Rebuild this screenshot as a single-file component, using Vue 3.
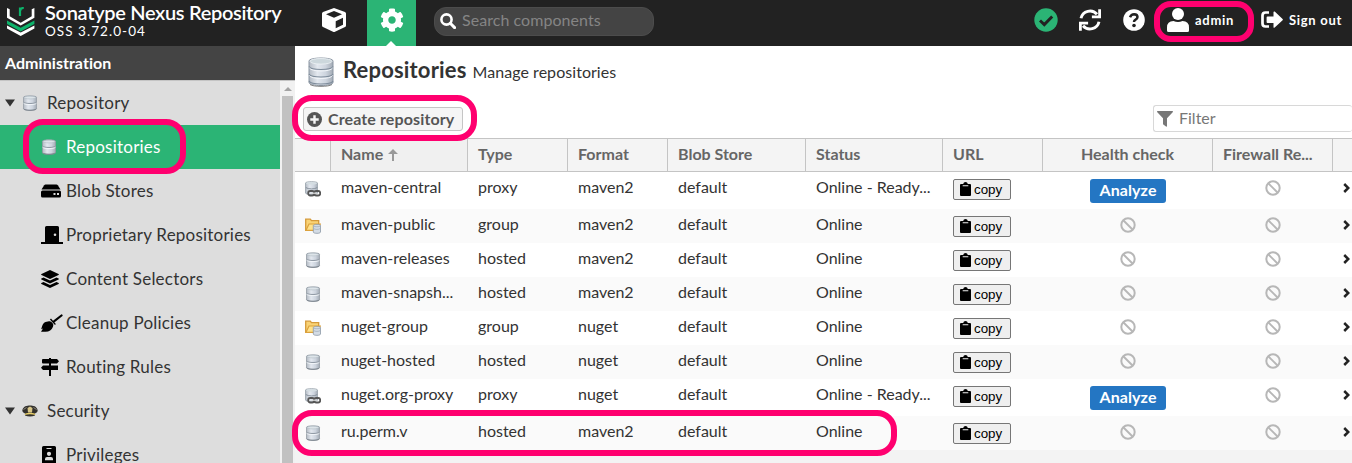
<script setup>
const menu = [
  { label: 'Repository', icon: 'db', group: true },
  { label: 'Repositories', icon: 'db', active: true },
  { label: 'Blob Stores', icon: 'hdd' },
  { label: 'Proprietary Repositories', icon: 'door' },
  { label: 'Content Selectors', icon: 'layers' },
  { label: 'Cleanup Policies', icon: 'broom' },
  { label: 'Routing Rules', icon: 'signs' },
  { label: 'Security', icon: 'cap', group: true },
  { label: 'Privileges', icon: 'badge' },
]

const columns = ['', 'Name', 'Type', 'Format', 'Blob Store', 'Status', 'URL', 'Health check', 'Firewall Re...', '']

const rows = [
  { name: 'maven-central', type: 'proxy', format: 'maven2' },
  { name: 'maven-public', type: 'group', format: 'maven2' },
  { name: 'maven-releases', type: 'hosted', format: 'maven2' },
  { name: 'maven-snapsh...', type: 'hosted', format: 'maven2' },
  { name: 'nuget-group', type: 'group', format: 'nuget' },
  { name: 'nuget-hosted', type: 'hosted', format: 'nuget' },
  { name: 'nuget.org-proxy', type: 'proxy', format: 'nuget' },
  { name: 'ru.perm.v', type: 'hosted', format: 'maven2' },
]
const rowIcon = { proxy: 'proxy', group: 'group', hosted: 'db' }
</script>

<template>
  <div class="app">
    <svg class="defs" width="0" height="0" aria-hidden="true">
      <linearGradient id="metal" x1="0" x2="1" y1="0" y2="0">
        <stop offset="0" stop-color="#b3bac3" /><stop offset=".35" stop-color="#e3e8ef" />
        <stop offset=".7" stop-color="#cdd4de" /><stop offset="1" stop-color="#a3abb5" />
      </linearGradient>
      <symbol id="db" viewBox="0 0 16 16">
        <path d="M1.500 2.200C1.500 .4 14.500 .4 14.500 2.200V13.800C14.500 15.800 1.500 15.800 1.500 13.800Z" fill="url(#metal)" stroke="#959da6" stroke-width=".8" />
        <ellipse cx="8" cy="2.600" rx="6" ry="1.300" fill="#dde4e9" stroke="#a9b4bc" stroke-width=".5" />
        <path d="M1.600 7.200C3 8.900 13 8.900 14.400 7.200" fill="none" stroke="#87919c" stroke-width=".9" />
        <path d="M1.600 8.300C3 10 13 10 14.400 8.300" fill="none" stroke="#f4f7fa" stroke-width=".9" />
        <path d="M1.700 13.800C3 15.800 13 15.800 14.300 13.800" fill="none" stroke="#757e87" stroke-width=".9" />
      </symbol>
      <symbol id="bigdb" viewBox="0 0 26 30">
        <path d="M1 4C1 0 25 0 25 4V25.500C25 29.500 1 29.500 1 25.500Z" fill="url(#metal)" stroke="#8b96a3" />
        <ellipse cx="13" cy="4.300" rx="11" ry="2.800" fill="#ccd7dc" stroke="#eef2f5" stroke-width=".8" />
        <path d="M1 9.500C3 13.500 23 13.500 25 9.500M1 17C3 21 23 21 25 17M1 24C3 28 23 28 25 24" fill="none" stroke="#7e8c9b" stroke-width="1.200" />
        <path d="M1.500 11C3 15 23 15 24.500 11M1.500 18.500C3 22.500 23 22.500 24.500 18.500" fill="none" stroke="#f2f5f9" />
        <path d="M2 27.500C5 30 21 30 24 27.500" fill="none" stroke="#777" stroke-width=".9" />
      </symbol>
      <symbol id="proxy" viewBox="0 0 16 16">
        <path d="M.5 2C.5 .2 12.500 .2 12.500 2V12C12.500 14 .5 14 .5 12Z" fill="url(#metal)" stroke="#98a2ab" stroke-width=".8" />
        <ellipse cx="6.500" cy="2.300" rx="5.500" ry="1.200" fill="#d4dde2" />
        <path d="M.8 6.500C3 8.400 10 8.400 12.300 6.500" fill="none" stroke="#87919c" />
        <g fill="none" stroke="#555" stroke-width="1.800"><rect x="3.200" y="10" width="6" height="4.500" rx="2" /><rect x="9.200" y="10" width="6" height="4.500" rx="2" /></g>
        <path d="M6.500 12.200H12" stroke="#ddd" stroke-width="1.200" />
      </symbol>
      <symbol id="group" viewBox="0 0 16 16">
        <path d="M.7 12.300V1.200H5.300L6.500 2.700H13.700V6L11.500 12.300Z" fill="#f9d376" stroke="#d59a3a" stroke-width="1.300" />
        <path d="M1 12.300L4 6H15.300L12 12.300Z" fill="#ffe28b" stroke="#dca23d" stroke-width="1.200" />
        <path d="M8.300 7.500C8.300 6 15.500 6 15.500 7.500V14C15.500 15.800 8.300 15.800 8.300 14Z" fill="#d4dce5" stroke="#8b98a6" stroke-width=".8" />
        <path d="M8.500 10.500C10 11.700 14 11.700 15.300 10.500M8.500 8C10 9 14 9 15.300 8" fill="none" stroke="#a2aebb" stroke-width=".8" />
      </symbol>
      <symbol id="hdd" viewBox="0 0 20 16">
        <path d="M4.500 1.500H15.500Q16.300 1.500 16.800 2.200L19.500 6.500H.5L3.200 2.200Q3.700 1.500 4.500 1.500Z" />
        <path d="M1.500 7.500H18.500Q20 7.500 20 9V13Q20 14.500 18.500 14.500H1.500Q0 14.500 0 13V9Q0 7.500 1.500 7.500ZM12.500 10V12H14.500V10ZM16 10V12H18V10Z" fill-rule="evenodd" />
      </symbol>
      <symbol id="door" viewBox="0 0 22 18">
        <path d="M0 16H4V1.500Q4 0 5.500 0H16.500Q18 0 18 1.500V16H22V18H0ZM14 7.500A1.300 1.300 0 1 0 14 10.100A1.300 1.300 0 1 0 14 7.500Z" fill-rule="evenodd" />
      </symbol>
      <symbol id="layers" viewBox="0 0 18 18">
        <path d="M9 0L17.500 4Q18.300 4.500 17.500 5L9 9L.5 5Q-.3 4.500 .5 4Z" />
        <path d="M.4 8.500L2.500 7.600L9 10.600L15.500 7.600L17.600 8.500Q18.200 9 17.600 9.500L9 13.500L.4 9.500Q-.2 9 .4 8.500Z" />
        <path d="M.4 13L2.500 12L9 15L15.500 12L17.600 13Q18.200 13.500 17.600 14L9 18L.4 14Q-.2 13.500 .4 13Z" />
      </symbol>
      <symbol id="broom" viewBox="0 0 22 18">
        <path d="M20.500 1.500L13 7.300" stroke="#000" stroke-width="2.200" stroke-linecap="round" />
        <path d="M10 4.500L15 10.200L13.700 10.800L8.900 5.600Z" />
        <path d="M8 7.300Q10 7 11.500 8.900Q13 10.600 12 12.700Q10 17.800 4.500 17.800H0L2 14.500L.2 15.200Q1.500 9 4.500 8Z" />
      </symbol>
      <symbol id="signs" viewBox="0 0 18 18">
        <path d="M8 0H10V1H16L18 3.200L16 5.500H10V7.500H17V12H10V18H8V12H2L0 9.800L2 7.500H8V5.500H2Q1 5.500 1 4.500V2Q1 1 2 1H8Z" />
      </symbol>
      <symbol id="cap" viewBox="0 0 16 12">
        <path d="M.3 5.500C1 1 5 .4 8 .4S15 1 15.700 5.500C15.500 7.500 14 8 13 8.500V10.500Q8 12.500 3 10.500V8.500C2 8 .5 7.500 .3 5.500Z" fill="#33312d" />
        <path d="M5.500 3L8 1.500L10.500 3L10 7.500H6Z" fill="#d9c789" />
        <path d="M3.200 8.500Q8 6.800 12.800 8.500L13.500 10Q8 8.700 2.500 10Z" fill="#ead16b" />
        <path d="M1.500 4.500L4.500 2.500M14.500 4.500L11.500 2.500" stroke="#8c8a80" />
      </symbol>
      <symbol id="badge" viewBox="0 0 14 18">
        <path d="M1.500 0H12.500Q14 0 14 1.500V18H0V1.500Q0 0 1.500 0ZM4.500 2V3H9.500V2ZM7 5.700A2.100 2.100 0 1 0 7 9.900A2.100 2.100 0 1 0 7 5.700ZM3 14.300H11V13Q11 11 9 11H5Q3 11 3 13Z" fill-rule="evenodd" />
      </symbol>
      <symbol id="check" viewBox="0 0 24 24">
        <circle cx="12" cy="12" r="11.700" fill="#2bb475" /><path d="M6 12.500L10.300 16.600L18.200 8.400" fill="none" stroke="#222" stroke-width="2.900" />
      </symbol>
      <symbol id="refresh" viewBox="0 0 22 22">
        <path d="M2 9.300A9.200 9.200 0 0 1 18 5.300M20 12.700A9.200 9.200 0 0 1 4 16.700" fill="none" stroke="#fff" stroke-width="2.900" />
        <path d="M19.200 .3H22V9.300H12.900V6.500H19.200ZM2.800 21.700H0V12.700H9.100V15.500H2.800Z" fill="#fff" />
      </symbol>
      <symbol id="help" viewBox="0 0 22 22">
        <circle cx="11" cy="11" r="10.800" fill="#fff" />
        <path d="M7 8.200Q8.200 5.200 11.100 5.200Q14.500 5.300 14.500 8.100Q14.500 9.700 12.600 10.700Q11 11.500 11 12.900" fill="none" stroke="#222" stroke-width="2.500" />
        <circle cx="11" cy="16.500" r="1.800" fill="#222" />
      </symbol>
      <symbol id="user" viewBox="0 0 22 24">
        <circle cx="11" cy="6" r="6" fill="#fff" /><path d="M0 24V19.500Q0 13 6.500 13Q11 15 15.500 13Q22 13 22 19.500V22.500Q22 24 20.500 24H1.500Q0 24 0 22.500Z" fill="#fff" />
      </symbol>
      <symbol id="out" viewBox="0 0 22 18">
        <path d="M8 1.500H4.500Q1.500 1.500 1.500 4.500V12.500Q1.500 15.500 4.500 15.500H8" fill="none" stroke="#fff" stroke-width="2.700" />
        <path d="M6.500 5.500H12.500V1Q12.700 0 13.700 .6L21.600 8Q22.200 8.600 21.600 9.200L13.700 16.600Q12.700 17.200 12.500 16.200V12H6.500Q5.600 12 5.600 11V6.500Q5.600 5.500 6.500 5.500Z" fill="#fff" />
      </symbol>
      <symbol id="ban" viewBox="0 0 16 16">
        <circle cx="8" cy="8" r="6.700" fill="none" stroke="#b7b7b7" stroke-width="2" /><path d="M3.500 3.500L12.500 12.500" stroke="#b7b7b7" stroke-width="1.900" />
      </symbol>
      <symbol id="clip" viewBox="0 0 11 14">
        <path d="M1 2H3.200Q3.500 0 5.500 0Q7.500 0 7.800 2H10Q11 2 11 3V13Q11 14 10 14H1Q0 14 0 13V3Q0 2 1 2ZM2.700 3.300V4.300H8.300V3.300Z" fill-rule="evenodd" />
      </symbol>
    </svg>

    <header class="topbar">
      <svg class="logo" viewBox="0 0 28 30">
        <path d="M0 3L2.700 4.200V11.200L13.700 17.700L24.700 11.200V4.200L27.400 3V12.700L13.700 20.500L0 12.700Z" fill="#fff" transform="translate(0 -2)" />
        <path d="M0 13.500L13.700 20.800L27.400 13.500V17L13.700 24.500L0 17Z" fill="#0db36b" />
        <path d="M0 19.500L13.700 26.500L27.400 19.500V22.500L13.700 30L0 22.500Z" fill="#fff" transform="translate(0 -1)" />
        <path d="M13 9V.5M13 4Q13.500 .8 16.800 1" fill="none" stroke="#0db36b" stroke-width="2.200" />
      </svg>
      <div class="brand">
        <div class="product">Sonatype Nexus Repository</div>
        <div class="version">OSS 3.72.0-04</div>
      </div>
      <div class="mode">
        <svg width="26" height="24" viewBox="0 0 26 24"><path d="M13 0L24 4Q25 4.500 25 5.500V17.500Q25 18.500 24 19L14 23.700Q13 24.200 12 23.700L2 19Q1 18.500 1 17.500V5.500Q1 4.500 2 4ZM13 3L5 6.200L13 9.700L21 6.200ZM14.700 13.200V20.200L22 16.700V9.700Z" fill="#fff" fill-rule="evenodd" /></svg>
      </div>
      <div class="mode selected">
        <svg width="24" height="24" viewBox="0 0 512 512"><path fill="#fff" d="M487.400 315.700l-42.600-24.600c4.300-23.200 4.300-47 0-70.200l42.600-24.600c4.900-2.800 7.100-8.600 5.500-14-11.100-35.600-30-67.800-54.700-94.600-3.800-4.100-10-5.100-14.800-2.300L380.800 110c-17.900-15.400-38.500-27.300-60.800-35.100V25.800c0-5.600-3.900-10.500-9.400-11.700-36.700-8.200-74.300-7.800-109.200 0-5.500 1.200-9.400 6.100-9.400 11.700V75c-22.200 7.900-42.800 19.800-60.800 35.100L88.700 85.500c-4.900-2.800-11-1.900-14.800 2.300-24.700 26.700-43.600 58.900-54.700 94.600-1.700 5.400.6 11.200 5.500 14L67.300 221c-4.300 23.200-4.300 47 0 70.200l-42.600 24.600c-4.900 2.800-7.100 8.600-5.500 14 11.100 35.600 30 67.800 54.700 94.600 3.800 4.100 10 5.100 14.800 2.300l42.600-24.600c17.900 15.400 38.500 27.300 60.800 35.100v49.200c0 5.600 3.900 10.500 9.400 11.700 36.700 8.200 74.300 7.800 109.200 0 5.500-1.200 9.400-6.100 9.400-11.700v-49.200c22.200-7.900 42.800-19.800 60.800-35.100l42.600 24.600c4.900 2.800 11 1.900 14.800-2.300 24.700-26.700 43.600-58.900 54.700-94.600 1.500-5.500-.7-11.300-5.600-14.100zM256 336c-44.100 0-80-35.900-80-80s35.900-80 80-80 80 35.900 80 80-35.900 80-80 80z" /></svg>
      </div>
      <div class="search">
        <svg width="16" height="16" viewBox="0 0 16 16"><circle cx="6.500" cy="6.500" r="5.100" fill="none" stroke="#fff" stroke-width="2.600" /><path d="M10.300 10.300L14.600 14.600" stroke="#fff" stroke-width="3" stroke-linecap="round" /></svg>
        <span>Search components</span>
      </div>
      <div class="actions">
        <svg class="a-check" width="24" height="24"><use href="#check" /></svg>
        <svg class="a-refresh" width="22" height="22"><use href="#refresh" /></svg>
        <svg class="a-help" width="22" height="22"><use href="#help" /></svg>
        <svg class="a-user" width="22" height="24"><use href="#user" /></svg>
        <span class="admin">admin</span>
        <svg class="a-out" width="22" height="18"><use href="#out" /></svg>
        <span class="signout">Sign out</span>
      </div>
    </header>

    <div class="body">
      <aside class="side">
        <div class="side-title">Administration</div>
        <div class="side-body">
          <nav class="tree">
            <div v-for="m in menu" :key="m.label" class="node" :class="{ group: m.group, active: m.active }">
              <svg v-if="m.group" class="caret" width="10" height="8" viewBox="0 0 10 8"><path d="M0 .5H10L5 7.500Z" /></svg>
              <span class="glyph" :class="'g-' + m.icon"><svg><use :href="'#' + m.icon" /></svg></span>
              <span class="label">{{ m.label }}</span>
            </div>
          </nav>
          <div class="scroll"><svg width="8" height="4" viewBox="0 0 8 4"><path d="M4 0L8 4H0Z" fill="#a3a3a3" /></svg><i></i></div>
        </div>
      </aside>

      <main class="main">
        <div class="heading">
          <svg width="26" height="30"><use href="#bigdb" /></svg>
          <h1>Repositories</h1>
          <span>Manage repositories</span>
        </div>
        <div class="toolbar">
          <div class="create">
            <svg width="15" height="15" viewBox="0 0 16 16"><circle cx="8" cy="8" r="8" fill="#555" /><path d="M8 3.500V12.500M3.500 8H12.500" stroke="#f5f5f5" stroke-width="2.600" /></svg>
            <span>Create repository</span>
          </div>
          <div class="filter">
            <svg width="16" height="16" viewBox="0 0 16 16"><path d="M.5 0H15.500Q16.300 .5 15.700 1.200L10 7.200V15.300Q9.800 16 9 15.600L6.300 13.500Q6 13.200 6 12.800V7.200L.3 1.200Q-.3 .5 .5 0Z" fill="#777" /></svg>
            <span>Filter</span>
          </div>
        </div>
        <div class="row thead">
          <div v-for="(c, i) in columns" :key="i" class="cell" :class="'c' + i">
            <span>{{ c }}</span><svg v-if="i === 1" class="sort" width="10" height="12" viewBox="0 0 10 12"><path d="M5 0L10 5H6V12H4V5H0Z" fill="#999" /></svg>
          </div>
        </div>
        <div v-for="r in rows" :key="r.name" class="row data" :class="{ tall: r.type === 'proxy' }">
          <div class="cell c0"><svg width="16" height="16"><use :href="'#' + rowIcon[r.type]" /></svg></div>
          <div class="cell c1">{{ r.name }}</div>
          <div class="cell c2">{{ r.type }}</div>
          <div class="cell c3">{{ r.format }}</div>
          <div class="cell c4">default</div>
          <div class="cell c5">{{ r.type === 'proxy' ? 'Online - Ready...' : 'Online' }}</div>
          <div class="cell c6"><span class="copy"><svg width="11" height="14"><use href="#clip" /></svg>copy</span></div>
          <div class="cell c7">
            <span v-if="r.type === 'proxy'" class="analyze">Analyze</span>
            <svg v-else width="16" height="16"><use href="#ban" /></svg>
          </div>
          <div class="cell c8"><svg width="16" height="16"><use href="#ban" /></svg></div>
          <div class="cell c9"><svg width="7" height="10" viewBox="0 0 7 10"><path d="M1.200 1L5.300 5L1.200 9" fill="none" stroke="#222" stroke-width="2.500" /></svg></div>
        </div>
      </main>
    </div>

    <div class="mark m-admin"></div>
    <div class="mark m-nav"></div>
    <div class="mark m-create"></div>
    <div class="mark m-row"></div>
  </div>
</template>

<style>
body { margin: 0; overflow: hidden; }
</style>

<style scoped>
.app { position: relative; width: 1352px; height: 463px; overflow: hidden; display: flex; flex-direction: column; font-family: Lato, "Open Sans", sans-serif; color: #333; font-size: 16px; background: #fff; }
.app *, .app { box-sizing: border-box; }
svg { display: block; flex: none; }
.defs { position: absolute; }
.topbar { height: 46px; flex: none; background: #222; color: #fff; display: flex; }
.logo { width: 28px; height: 30px; margin: 7px 0 0 7px; }
.brand { width: 274px; padding-left: 10px; white-space: nowrap; }
.product { font-size: 20px; line-height: 24px; font-weight: 600; letter-spacing: -.32px; }
.version { font-size: 13.500px; line-height: 14px; letter-spacing: 1.050px; }
.mode { width: 49px; height: 46px; display: flex; justify-content: center; padding-top: 8px; }
.selected { background: #2bb475; margin-left: 9px; position: relative; }
.selected::after { content: ""; position: absolute; left: 19px; bottom: 0; border: 5px solid transparent; border-top: 0; border-bottom-color: #fff; }
.search { width: 220px; height: 29px; margin: 7px 0 0 18px; border: 1px solid #4c4c4c; border-radius: 12px; background: #444; display: flex; align-items: center; gap: 6px; padding: 0 0 2px 5px; color: #858585; letter-spacing: .05px; }
.search span { margin-top: -2px; }
.actions { flex: 1; display: flex; align-items: flex-start; font-size: 13px; font-weight: 700; line-height: 18px; white-space: nowrap; letter-spacing: .7px; }
.a-check { margin: 8px 0 0 380px; }
.a-refresh { margin: 9px 0 0 21px; }
.a-help { margin: 9px 0 0 22px; }
.a-user { margin: 8px 0 0 22px; }
.admin { margin: 11px 0 0 6px; width: 66px; }
.a-out { margin: 11px 0 0; }
.signout { margin: 11px 0 0 6px; }
.body { flex: 1; display: flex; min-height: 0; }
.side { width: 295px; flex: none; display: flex; flex-direction: column; background: #ddd; }
.side-title { height: 34px; flex: none; background: #444; color: #fff; font-weight: 700; line-height: 33px; padding-left: 5px; letter-spacing: .05px; }
.side-body { flex: 1; display: flex; min-height: 0; border-top: 1px solid #c4c4c4; }
.tree { width: 280px; overflow: hidden; }
.node { height: 44px; display: flex; align-items: center; padding-left: 41px; font-size: 17px; letter-spacing: .22px; white-space: nowrap; }
.node.group { padding-left: 5px; }
.label { line-height: 20px; }
.active { background: #2bb475; color: #fff; }
.caret { margin-right: 7px; fill: #333; }
.glyph { width: 25px; }
.glyph svg { width: 16px; height: 16px; }
.glyph.g-hdd svg { width: 20px; }
.glyph.g-door svg, .glyph.g-broom svg { width: 22px; height: 18px; }
.glyph.g-layers svg, .glyph.g-signs svg { width: 18px; height: 18px; }
.glyph.g-cap svg { width: 16px; height: 12px; }
.glyph.g-badge svg { width: 14px; height: 18px; margin-left: 1px; }
.scroll { width: 15px; background: #f1f1f1; display: flex; flex-direction: column; align-items: center; padding-top: 6px; }
.scroll i { width: 11px; flex: 1; background: #c1c1c1; margin-top: 5px; }
.main { flex: 1; min-width: 0; background: #f3f3f3; }
.heading { height: 50px; background: #fff; display: flex; align-items: baseline; padding: 11px 0 0 13px; }
.heading svg { align-self: flex-start; }
h1 { margin: -1px 0 0 9px; font-size: 22px; line-height: 28px; font-weight: 700; letter-spacing: .17px; }
.heading span { margin-left: 6px; font-size: 16px; letter-spacing: .05px; }
.toolbar { height: 42px; background: #fff; display: flex; justify-content: space-between; align-items: flex-start; }
.create { margin: 11px 0 0 8px; width: 160px; height: 24px; background: #f5f5f5; border: 1px solid #c5c5c5; border-radius: 3px; display: flex; align-items: center; gap: 6px; padding-left: 3px; font-weight: 700; color: #555; white-space: nowrap; letter-spacing: .12px; }
.create span, .filter span { margin-top: -2px; }
.filter { margin-top: 9px; width: 199px; height: 27px; border: 1px solid #d8d8d8; border-right: 0; border-radius: 3px; display: flex; align-items: center; gap: 6px; padding-left: 3px; color: #777; }
.row { display: grid; grid-template-columns: 36px 137px 100px 100px 138px 137px 100px 170px 120px 19px; }
.cell { padding-left: 10px; white-space: nowrap; overflow: hidden; }
.thead { height: 34px; background: #f4f4f4; border-top: 1px solid #c4c4c4; border-bottom: 1px solid #c4c4c4; font-weight: 700; color: #666; line-height: 30px; }
.thead .cell { border-right: 1px solid #c4c4c4; }
.thead .c1 { display: flex; align-items: flex-start; background: #f0f0f0; }
.thead .c9 { border: 0; }
.sort { margin: 10px 0 0 5px; }
.data { height: 34px; line-height: 30px; background: #fff; }
.data.tall { height: 37px; }
.data:nth-child(odd) { background: #fafafa; }
.data:nth-child(even) { background: #fff; }
.data .c0 { padding-top: 9px; }
.thead .c7 { text-align: center; padding: 0; }
.data .c7 { display: flex; justify-content: center; padding: 8px 0 0; }
.data .c7:has(.analyze) { padding-top: 7px; }
.data .c8 { display: flex; justify-content: center; padding: 8px 0 0; }
.data .c9 { padding: 11px 0 0 10px; }
.copy { margin-top: 7px; width: 58px; height: 21px; display: flex; align-items: center; gap: 3px; padding: 0 0 1px 6px; border: 1px solid #767676; border-radius: 2px; background: #efefef; color: #000; font: 13.333px/17px "Liberation Sans", sans-serif; }
.analyze { width: 76px; height: 24px; border-radius: 3px; background: #2476c3; color: #fff; font-weight: 700; line-height: 22px; text-align: center; letter-spacing: .1px; }
.mark { position: absolute; border: 6px solid #ff006f; border-radius: 20px; }
.m-admin { left: 1154px; top: 1px; width: 100px; height: 41px; border-radius: 17px; }
.m-nav { left: 23px; top: 119px; width: 163px; height: 55px; }
.m-create { left: 292px; top: 95px; width: 185px; height: 46px; }
.m-row { left: 292px; top: 410px; width: 605px; height: 46px; }
</style>
